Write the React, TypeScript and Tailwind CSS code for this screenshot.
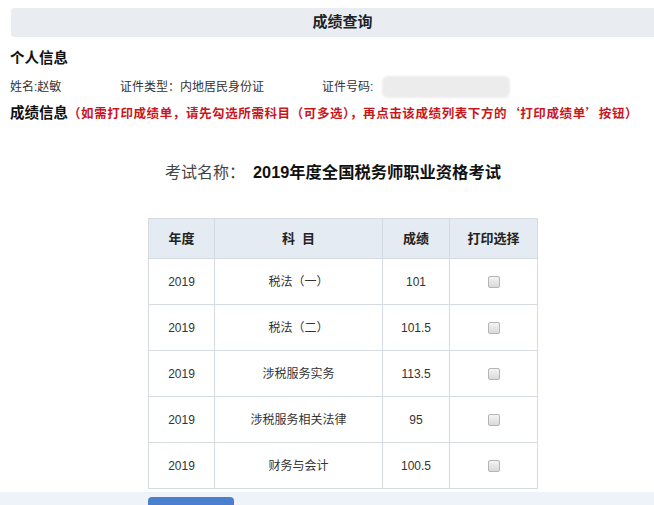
import React from 'react';

const rows = [
  { year: '2019', subject: '税法（一）', score: '101' },
  { year: '2019', subject: '税法（二）', score: '101.5' },
  { year: '2019', subject: '涉税服务实务', score: '113.5' },
  { year: '2019', subject: '涉税服务相关法律', score: '95' },
  { year: '2019', subject: '财务与会计', score: '100.5' },
];

const font = { fontFamily: '"Liberation Sans", "Noto Sans CJK SC", sans-serif' };
const cjk = { fontFamily: '"Noto Sans CJK SC", sans-serif' };

export default function App() {
  return (
    <div className="w-[654px] h-[505px] overflow-hidden bg-white text-[#333]" style={font}>
      <div className="pt-[8px] pl-[11px]">
        <div className="h-[29px] bg-[#e9edf2] flex items-center justify-center rounded-l-[3px]">
          <span className="text-[15px] font-bold text-[#222] pl-[20px]">成绩查询</span>
        </div>
      </div>

      <div className="px-[10px]">
        <h2 className="mt-[11px] text-[14.5px] font-bold text-[#111] leading-[20px]">个人信息</h2>
        <div className="mt-[8px] flex items-center text-[12px] leading-[22px] text-[#333] whitespace-nowrap">
          <span className="w-[110px] shrink-0">姓名:赵敏</span>
          <span className="w-[202px] shrink-0">证件类型：内地居民身份证</span>
          <span className="w-[60px] shrink-0">证件号码:</span>
          <span className="h-[22px] w-[128px] shrink-0 rounded-[6px] bg-[#ececec] blur-[1px]" />
        </div>
        <div className="mt-[4px] flex items-baseline leading-[22px] whitespace-nowrap">
          <span className="text-[14.5px] font-bold text-[#111]">成绩信息</span>
          <span className="text-[12.5px] tracking-[0.6px] font-bold text-[#c8161d]" style={cjk}>（如需打印成绩单，请先勾选所需科目（可多选），再点击该成绩列表下方的‘打印成绩单’按钮）</span>
        </div>
      </div>

      <div className="mt-[36px] flex justify-center items-baseline pl-[12px]">
        <span className="text-[16px] text-[#444]">考试名称：</span>
        <span className="ml-[8px] text-[16.3px] font-bold text-[#111]">2019年度全国税务师职业资格考试</span>
      </div>

      <div className="mt-[33px] ml-[148px] w-[390px]">
        <table className="w-full border-collapse border border-[#d6dbe2] text-[12px]">
          <thead>
            <tr className="h-[40px] bg-[#e5ebf2]">
              <th className="w-[66px] border border-[#d6dbe2] font-bold text-[13px] text-[#222]">年度</th>
              <th className="w-[168px] border border-[#d6dbe2] font-bold text-[13px] text-[#222]">科&nbsp;&nbsp;目</th>
              <th className="w-[67px] border border-[#d6dbe2] font-bold text-[13px] text-[#222]">成绩</th>
              <th className="border border-[#d6dbe2] font-bold text-[13px] text-[#222]">打印选择</th>
            </tr>
          </thead>
          <tbody>
            {rows.map(r => (
              <tr key={r.subject} className="h-[46px]">
                <td className="border border-[#d6dbe2] text-center text-[#333]">{r.year}</td>
                <td className="border border-[#d6dbe2] text-center text-[#333]">{r.subject}</td>
                <td className="border border-[#d6dbe2] text-center text-[#333]">{r.score}</td>
                <td className="border border-[#d6dbe2] text-center">
                  <span className="inline-block align-middle w-[12px] h-[12px] rounded-[2px] border border-[#b5b5b5] bg-gradient-to-b from-[#f4f4f4] to-[#d9d9d9]" />
                </td>
              </tr>
            ))}
          </tbody>
        </table>
      </div>

      <div className="mt-[3px] h-[20px] bg-[#eef2f9] pl-[148px]">
        <div className="pt-[5px]">
          <div className="w-[86px] h-[10px] rounded-t-[4px] bg-[#4a7fd0]" />
        </div>
      </div>
    </div>
  );
}
